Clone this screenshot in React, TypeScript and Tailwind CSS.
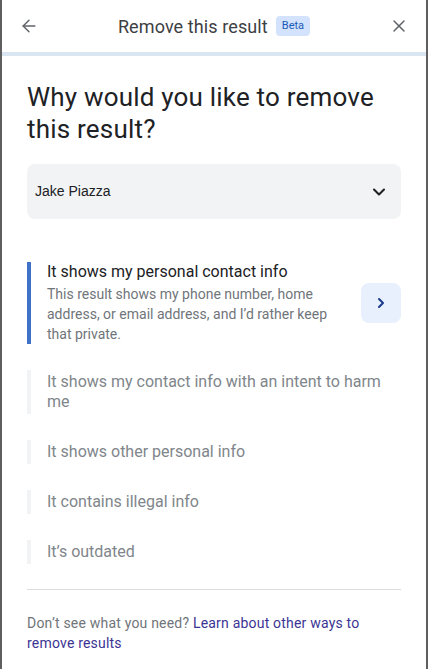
import { ArrowLeft, X, ChevronDown, ChevronRight } from "lucide-react";

const options = [
  { title: "It shows my contact info with an intent to harm me" },
  { title: "It shows other personal info" },
  { title: "It contains illegal info" },
  { title: "It\u2019s outdated" },
];

export default function App() {
  return (
    <div
      className="h-[669px] w-[428px] overflow-hidden border-x-2 border-[#5f5f5f] bg-white text-[#202124]"
      style={{ fontFamily: "Roboto, 'Open Sans', sans-serif" }}
    >
      {/* Header */}
      <header className="flex h-[56px] items-center justify-between border-b-4 border-[#d9e5f0] px-[17px]">
        <ArrowLeft className="h-5 w-5 text-[#5f6368]" strokeWidth={1.75} />
        <div className="flex items-center gap-2">
          <h1 className="text-[18px] tracking-[0.1px] text-[#3c4043]">Remove this result</h1>
          <span className="rounded-[4px] bg-[#d3e3fd] px-[6px] py-[2px] text-[11px] text-[#1a5bb8]">
            Beta
          </span>
        </div>
        <X className="h-5 w-5 text-[#5f6368]" strokeWidth={1.75} />
      </header>

      <main className="px-[25px] pt-[25px]">
        <h2 className="text-[26px] leading-[32px] tracking-[0.2px] text-[#202124]">
          Why would you like to remove this result?
        </h2>

        {/* Dropdown */}
        <div className="mt-[19px] flex h-[55px] items-center justify-between rounded-[8px] bg-[#f1f3f4] pl-[8px] pr-[12px]">
          <span className="text-[14px] text-[#202124]" style={{ fontFamily: "'Liberation Sans', Arial, sans-serif" }}>
            Jake Piazza
          </span>
          <ChevronDown className="h-5 w-5 text-[#202124]" strokeWidth={2.5} />
        </div>

        {/* Options */}
        <div className="mt-[43px] flex flex-col gap-[26px]">
          <div className="flex items-center border-l-4 border-[#3f73c8] pl-4">
            <div className="flex-1 pr-[20px]">
              <div className="text-[16px] leading-[20px] text-[#202124]">It shows my personal contact info</div>
              <p className="mt-[2px] text-[14px] leading-[20px] text-[#70757a]">
                This result shows my phone number, home address, or email address, and I&rsquo;d rather keep that private.
              </p>
            </div>
            <button className="flex h-[40px] w-[40px] items-center justify-center rounded-[8px] bg-[#e8f0fe]">
              <ChevronRight className="h-4 w-4 text-[#1a3a8a]" strokeWidth={3} />
            </button>
          </div>

          {options.map((o) => (
            <div key={o.title} className="border-l-4 border-[#f1f3f4] py-[2px] pl-4">
              <div className="text-[16px] leading-[20px] text-[#80868b]">{o.title}</div>
            </div>
          ))}
        </div>

        <div className="mt-[25px] border-t border-[#dadce0]" />

        <p className="mt-[23px] pr-[40px] text-[14px] leading-[20px] tracking-[0.2px] text-[#70757a]">
          Don&rsquo;t see what you need?{" "}
          <a className="text-[#3c3494]">Learn about other ways to remove results</a>
        </p>
      </main>
    </div>
  );
}
